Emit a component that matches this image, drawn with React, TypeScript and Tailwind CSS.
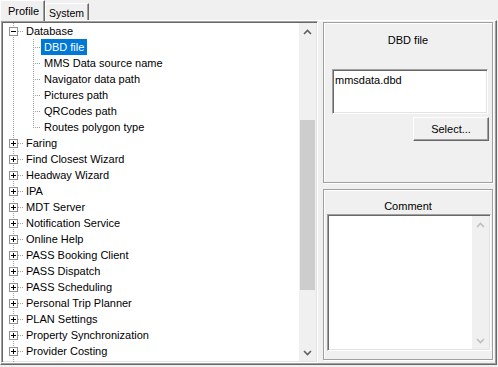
import React from 'react'

const dbChildren = ['DBD file', 'MMS Data source name', 'Navigator data path', 'Pictures path', 'QRCodes path', 'Routes polygon type']

const topItems = [
	'Faring',
	'Find Closest Wizard',
	'Headway Wizard',
	'IPA',
	'MDT Server',
	'Notification Service',
	'Online Help',
	'PASS Booking Client',
	'PASS Dispatch',
	'PASS Scheduling',
	'Personal Trip Planner',
	'PLAN Settings',
	'Property Synchronization',
	'Provider Costing',
]

const DOT = '#a0a0a0'

function ExpandBox({ open }: { open: boolean }) {
	return (
		<>
			<rect x={6.5} y={4.5} width={8} height={8} fill="#fff" stroke="#919191" />
			<line x1={8} y1={8.5} x2={13} y2={8.5} stroke="#000" />
			{!open && <line x1={10.5} y1={6} x2={10.5} y2={11} stroke="#000" />}
		</>
	)
}

function TopRow({ label, open }: { label: string; open?: boolean }) {
	return (
		<div className="flex h-[16px] items-center">
			<svg width="23" height="16" className="shrink-0" shapeRendering="crispEdges">
				<line x1={10.5} y1={0} x2={10.5} y2={16} stroke={DOT} strokeDasharray="1 1" />
				<line x1={15} y1={8.5} x2={21} y2={8.5} stroke={DOT} strokeDasharray="1 1" />
				<ExpandBox open={!!open} />
			</svg>
			<span className="whitespace-nowrap leading-[16px]">{label}</span>
		</div>
	)
}

function ChildRow({ label, last, selected }: { label: string; last?: boolean; selected?: boolean }) {
	return (
		<div className="flex h-[16px] items-center">
			<svg width="38" height="16" className="shrink-0" shapeRendering="crispEdges">
				<line x1={10.5} y1={0} x2={10.5} y2={16} stroke={DOT} strokeDasharray="1 1" />
				<line x1={30.5} y1={0} x2={30.5} y2={last ? 9 : 16} stroke={DOT} strokeDasharray="1 1" />
				<line x1={32} y1={8.5} x2={37} y2={8.5} stroke={DOT} strokeDasharray="1 1" />
			</svg>
			<span
				className={
					selected
						? 'h-[16px] whitespace-nowrap bg-[#0078d7] px-[3px] leading-[16px] text-white'
						: 'whitespace-nowrap px-[3px] leading-[16px]'
				}
			>
				{label}
			</span>
		</div>
	)
}

function Chevron({ down, color }: { down?: boolean; color: string }) {
	return (
		<svg width="9" height="6" viewBox="0 0 9 6">
			<polyline
				points={down ? '1,1 4.5,4.5 8,1' : '1,5 4.5,1.5 8,5'}
				fill="none"
				stroke={color}
				strokeWidth="1.6"
			/>
		</svg>
	)
}

export default function App() {
	return (
		<div className="h-[367px] w-[498px] overflow-hidden bg-[#f0f0f0] font-['Liberation_Sans',Arial,sans-serif] text-[11px] text-black">
			{/* tabs */}
			<div className="flex h-[20px] items-start">
				<div className="relative z-10 flex h-[21px] w-[45px] items-start border-l border-t border-r border-l-white border-t-white border-r-[#696969] bg-[#f0f0f0] pl-[7px] pt-[2px] shadow-[inset_-1px_0_#a0a0a0]">
					<span className="leading-[16px]">Profile</span>
				</div>
				<div className="mt-[3px] flex h-[17px] w-[44px] items-start border-l border-t border-r border-l-white border-t-white border-r-[#696969] pl-[3px] pt-[1px] shadow-[inset_-1px_0_#a0a0a0]">
					<span className="text-[10.5px] leading-[16px]">System</span>
				</div>
			</div>

			{/* page */}
			<div className="flex h-[345px] w-[497px] border-t border-l border-r border-b border-t-white border-l-white border-r-[#696969] border-b-[#696969] pb-[1px] pr-[2px] shadow-[inset_-1px_-1px_#a0a0a0]">
				{/* tree */}
				<div className="flex h-[342px] w-[317px] border border-t-[#a0a0a0] border-l-[#a0a0a0] border-r-white border-b-white bg-white shadow-[inset_1px_1px_#696969,inset_-1px_-1px_#e3e3e3]">
					<div className="flex flex-1 flex-col overflow-hidden pl-[1px] pt-[1px]">
						<TopRow label="Database" open />
						{dbChildren.map((c, i) => (
							<ChildRow key={c} label={c} selected={i === 0} last={i === dbChildren.length - 1} />
						))}
						{topItems.map((t) => (
							<TopRow key={t} label={t} />
						))}
						<div className="flex h-[16px] shrink-0">
							<svg width="23" height="16" shapeRendering="crispEdges">
								<line x1={10.5} y1={0} x2={10.5} y2={16} stroke={DOT} strokeDasharray="1 1" />
							</svg>
						</div>
					</div>
					<div className="mb-[1px] mr-[1px] mt-[1px] flex w-[17px] flex-col bg-[#f0f0f0]">
						<div className="flex h-[17px] items-center justify-center">
							<Chevron color="#606060" />
						</div>
						<div className="flex flex-1 flex-col">
							<div className="h-[80px]" />
							<div className="mx-[1px] h-[170px] bg-[#cdcdcd]" />
						</div>
						<div className="flex h-[17px] items-center justify-center">
							<Chevron down color="#606060" />
						</div>
					</div>
				</div>

				{/* right side */}
				<div className="ml-[5px] mt-[1px] flex w-[171px] flex-col gap-[6px]">
					<div className="flex h-[161px] w-[170px] flex-col border border-[#a0a0a0] shadow-[inset_1px_1px_#fff,1px_1px_#fff]">
						<div className="pt-[9px] text-center leading-[16px]">DBD file</div>
						<div className="ml-[8px] mt-[21px] h-[45px] w-[156px] border border-t-[#a0a0a0] border-l-[#a0a0a0] border-r-white border-b-white bg-white pl-[2px] pt-[2px] shadow-[inset_1px_1px_#696969,inset_-1px_-1px_#e3e3e3]">
							<span className="leading-[16px]">mmsdata.dbd</span>
						</div>
						<div className="ml-[89px] mt-[3px] flex h-[24px] w-[76px] items-center justify-center border border-t-white border-l-white border-r-[#696969] border-b-[#696969] shadow-[inset_-1px_-1px_#a0a0a0]">
							<span className="leading-[16px]">Select...</span>
						</div>
					</div>

					<div className="flex h-[171px] w-[170px] flex-col border border-[#a0a0a0] shadow-[inset_1px_1px_#fff,1px_1px_#fff]">
						<div className="pt-[8px] text-center leading-[16px]">Comment</div>
						<div className="ml-[3px] flex h-[137px] w-[164px] border border-t-[#a0a0a0] border-l-[#a0a0a0] border-r-white border-b-white bg-white shadow-[inset_1px_1px_#696969,inset_-1px_-1px_#e3e3e3]">
							<div className="flex-1" />
							<div className="mb-[1px] mr-[1px] mt-[1px] flex w-[17px] flex-col justify-between bg-[#f0f0f0]">
								<div className="flex h-[17px] items-center justify-center">
									<Chevron color="#bfbfbf" />
								</div>
								<div className="flex h-[17px] items-center justify-center">
									<Chevron down color="#bfbfbf" />
								</div>
							</div>
						</div>
					</div>
				</div>
			</div>
		</div>
	)
}
